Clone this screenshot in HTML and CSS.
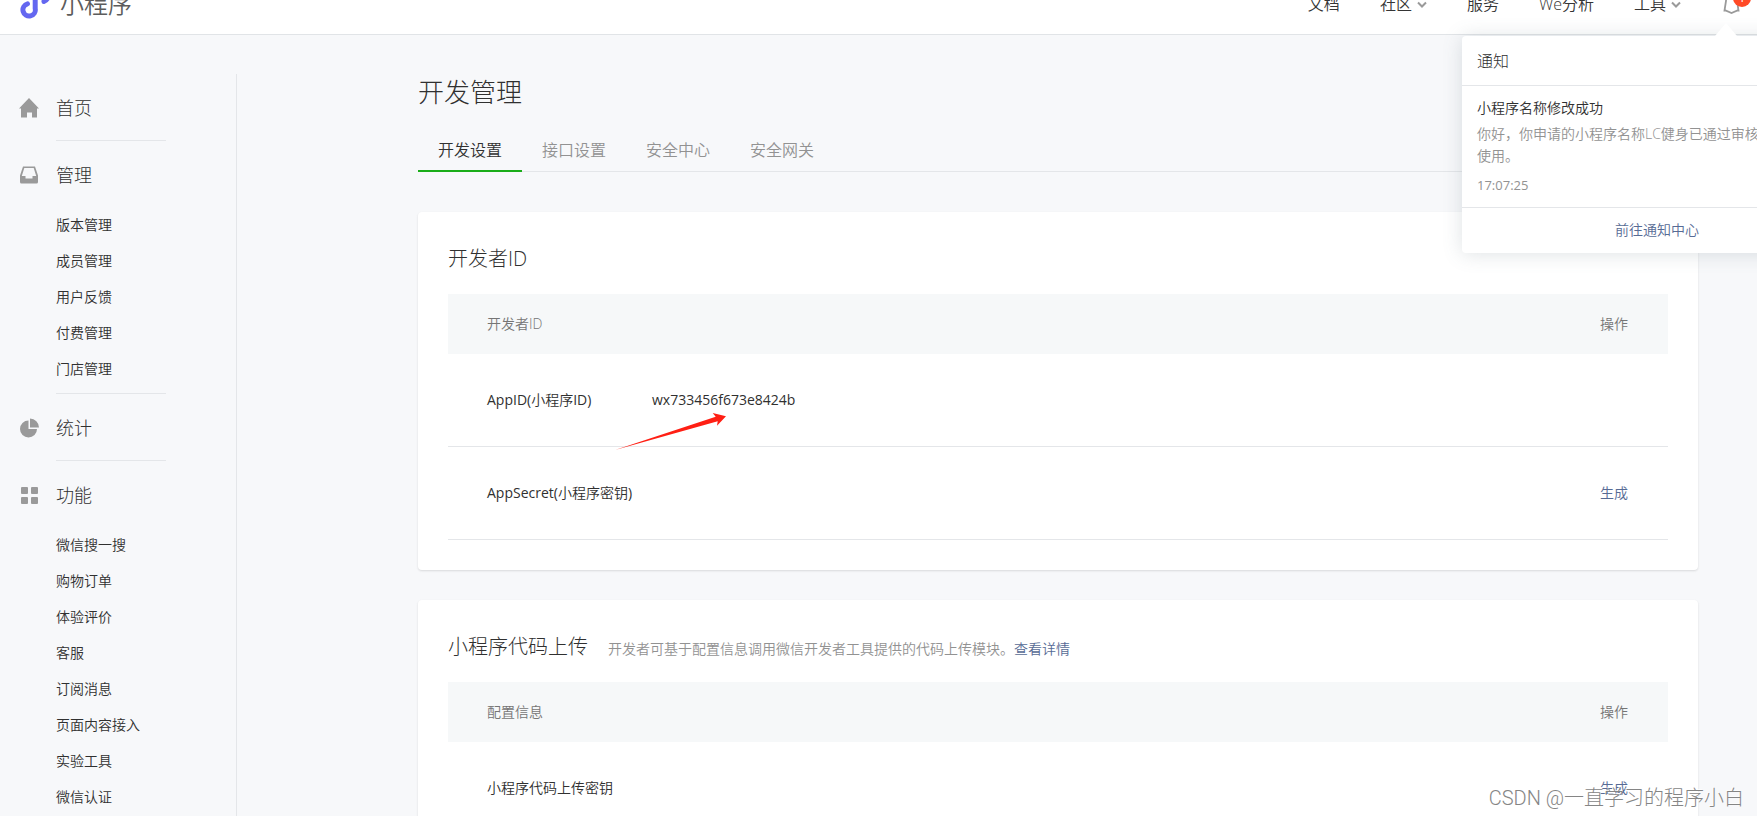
FILE: index.html
```html
<!DOCTYPE html>
<html lang="zh-CN">
<head>
<meta charset="utf-8">
<title>小程序 - 开发管理</title>
<link rel="stylesheet" href="styles.css">
</head>
<body>
<header class="header">
  <div class="header-inner">
    <a class="brand" href="#">
      <svg class="brand-logo" width="34" height="36" viewBox="18 -14 34 36" fill="none" stroke="#6467f0" stroke-width="5" stroke-linecap="round"><path d="M27.500 3.800A6.200 6.200 0 1 0 35.200 8.500V-4A6.500 6.500 0 1 1 44 1.500"/></svg>
      <span>小程序</span>
    </a>
    <nav class="nav">
      <a href="#">文档</a>
      <a href="#">社区<svg class="chevron" width="10" height="8" viewBox="0 0 10 8"><path d="M1 2.500l4 4 4-4"/></svg></a>
      <a href="#">服务</a>
      <a href="#">We分析</a>
      <a href="#">工具<svg class="chevron" width="10" height="8" viewBox="0 0 10 8"><path d="M1 2.500l4 4 4-4"/></svg></a>
      <button class="bell" type="button" aria-label="通知">
        <svg width="20" height="24" viewBox="0 0 20 24" fill="none" stroke="#9a9a9a" stroke-width="1.800"><path d="M5 9a5.500 5.500 0 0 1 11 0l1.500 9.500h-1L10.500 21 4.500 18.500h-1z"/></svg>
        <span class="badge">1</span>
      </button>
    </nav>
  </div>
</header>

<section class="popover">
  <h2 class="popover-title">通知</h2>
  <div class="notice">
    <h3>小程序名称修改成功</h3>
    <p>你好，你申请的小程序名称LC健身已通过审核<br>使用。</p>
    <time>17:07:25</time>
  </div>
  <a class="popover-link" href="#">前往通知中心</a>
</section>

<div class="page">
  <aside class="sidebar">
    <section class="group">
      <a class="group-head" href="#"><svg width="22" height="22" viewBox="0 0 22 22"><path d="M11 1L21 11.500H19V20.500H14V15.500H9V20.500H3V11.500H1Z"/></svg>首页</a>
    </section>
    <section class="group">
      <a class="group-head" href="#"><svg width="22" height="22" viewBox="0 0 22 22"><path fill-rule="evenodd" d="M5 2.500h12l3 9V18a1.500 1.500 0 0 1-1.500 1.500h-15A1.500 1.500 0 0 1 2 18v-6.500zM6.300 4L3.800 12H7.500v2.500h7V12h3.700L15.700 4z"/></svg>管理</a>
      <ul class="menu">
        <li><a href="#">版本管理</a></li>
        <li><a href="#">成员管理</a></li>
        <li><a href="#">用户反馈</a></li>
        <li><a href="#">付费管理</a></li>
        <li><a href="#">门店管理</a></li>
      </ul>
    </section>
    <section class="group">
      <a class="group-head" href="#"><svg width="22" height="22" viewBox="0 0 22 22"><path d="M10.500 3.500v8.500H19A8.500 8.500 0 1 1 10.500 3.500zM12 1.500a9 9 0 0 1 9 9h-9z"/></svg>统计</a>
    </section>
    <section class="group">
      <a class="group-head" href="#"><svg width="22" height="22" viewBox="0 0 22 22"><rect x="3" y="3" width="7" height="7" rx="1"/><rect x="13" y="3" width="7" height="7" rx="1"/><rect x="3" y="13" width="7" height="7" rx="1"/><rect x="13" y="13" width="7" height="7" rx="1"/></svg>功能</a>
      <ul class="menu">
        <li><a href="#">微信搜一搜</a></li>
        <li><a href="#">购物订单</a></li>
        <li><a href="#">体验评价</a></li>
        <li><a href="#">客服</a></li>
        <li><a href="#">订阅消息</a></li>
        <li><a href="#">页面内容接入</a></li>
        <li><a href="#">实验工具</a></li>
        <li><a href="#">微信认证</a></li>
      </ul>
    </section>
  </aside>

  <main class="main">
    <h1 class="title">开发管理</h1>
    <nav class="tabs">
      <a class="tab active" href="#">开发设置</a>
      <a class="tab" href="#">接口设置</a>
      <a class="tab" href="#">安全中心</a>
      <a class="tab" href="#">安全网关</a>
    </nav>

    <section class="card">
      <div class="card-head"><h2>开发者ID</h2></div>
      <table class="table">
        <thead><tr><th class="label">开发者ID</th><th></th><th class="action">操作</th></tr></thead>
        <tbody>
          <tr>
            <td class="label"><span class="latin">AppID(</span>小程序<span class="latin">ID)</span></td>
            <td class="value latin">wx733456f673e8424b<svg class="arrow" width="120" height="44" viewBox="0 0 120 44"><path fill="#ff1f14" d="M5 40L105.700 6.700L102.700 3L116 6.300L107 15.700L107.700 11.300Z"/></svg></td>
            <td class="action"></td>
          </tr>
          <tr><td class="label"><span class="latin">AppSecret(</span>小程序密钥<span class="latin">)</span></td><td></td><td class="action"><a href="#">生成</a></td></tr>
        </tbody>
      </table>
    </section>

    <section class="card">
      <div class="card-head">
        <h2>小程序代码上传</h2>
        <p>开发者可基于配置信息调用微信开发者工具提供的代码上传模块。<a href="#">查看详情</a></p>
      </div>
      <table class="table">
        <thead><tr><th class="label">配置信息</th><th></th><th class="action">操作</th></tr></thead>
        <tbody>
          <tr><td class="label">小程序代码上传密钥</td><td></td><td class="action"><a href="#">生成</a></td></tr>
        </tbody>
      </table>
    </section>
  </main>
</div>
<div class="watermark">CSDN @一直学习的程序小白</div>
</body>
</html>
```
FILE: styles.css
```css
* { box-sizing: border-box; }
html, body { height: 100%; }
body {
  margin: 0;
  position: relative;
  overflow: hidden;
  background: #f7f8fa;
  color: #303030;
  font: 350 14px/22px "Open Sans", "Noto Sans CJK SC", sans-serif;
}
h1, h2, h3, p, ul { margin: 0; padding: 0; font-weight: inherit; }
h1, h2 { font-weight: 300; }
ul { list-style: none; }
a { color: #576b95; text-decoration: none; }
.latin { font-weight: 400; }

.header {
  height: 35px;
  overflow: hidden;
  background: #fff;
  border-bottom: 1px solid #e1e4e7;
}
.header-inner {
  display: flex;
  justify-content: space-between;
  align-items: center;
  height: 60px;
  margin-top: -26px;
  padding: 0 16px 0 18px;
}
.brand {
  display: flex;
  align-items: center;
  gap: 8px;
  color: #5c5c5c;
  font-size: 24px;
  line-height: 36px;
}
.nav { display: flex; align-items: center; gap: 40px; font-size: 16px; line-height: 24px; }
.nav a { display: flex; align-items: center; gap: 5px; color: #353535; }
.chevron { fill: none; stroke: #9a9a9a; stroke-width: 2; }
.bell {
  position: relative;
  display: flex;
  padding: 0;
  border: 0;
  background: none;
}
.badge {
  position: absolute;
  top: -3px;
  right: -10px;
  width: 18px;
  height: 18px;
  border-radius: 9px;
  background: #ff4a26;
  color: #fff;
  font: 400 12px/18px "Open Sans", sans-serif;
  text-align: center;
}

.popover {
  position: absolute;
  z-index: 2;
  top: 36px;
  right: -95px;
  width: 390px;
  background: #fff;
  border-radius: 4px;
  box-shadow: 0 1px 20px rgba(90, 110, 120, 0.2);
}
.popover::before {
  content: "";
  position: absolute;
  top: -13px;
  left: 253px;
  border: 11px solid transparent;
  border-top: 0;
  border-bottom: 13px solid #fff;
}
.popover-title { padding: 13px 15px 12px; font-size: 16px; line-height: 24px; border-bottom: 1px solid #e4e6e9; }
.notice { padding: 11px 15px; border-bottom: 1px solid #e4e6e9; color: #929292; }
.notice h3 { margin-bottom: 4px; color: #303030; font-size: 14px; }
.notice time { display: block; margin-top: 7px; font-size: 13px; font-weight: 400; }
.popover-link { display: block; padding: 11px 0 12px; text-align: center; }

.page { display: flex; min-height: 100%; padding-top: 39px; }
.sidebar { flex: none; width: 237px; padding-left: 18px; border-right: 1px solid #e4e6e9; }
.group-head {
  display: flex;
  align-items: center;
  gap: 16px;
  height: 66px;
  padding-top: 1px;
  color: #303030;
  font-size: 18px;
  font-weight: 300;
}
.group-head svg { fill: #9a9a9a; }
.group + .group::before {
  content: "";
  display: block;
  width: 110px;
  height: 1px;
  margin-left: 38px;
  background: #e4e6e9;
}
.menu { padding: 0 0 6px 38px; }
.menu a { display: block; color: #303030; line-height: 36px; }

.main { flex: 1; min-width: 0; margin: 0 59px 0 181px; }
.title { font-size: 26px; line-height: 36px; }
.tabs { display: flex; margin: 20px 0 40px; border-bottom: 1px solid #e4e6e9; }
.tab {
  padding: 8px 20px;
  margin-bottom: -1px;
  border-bottom: 2px solid transparent;
  color: #929292;
  font-size: 16px;
  line-height: 24px;
}
.tab.active { color: #303030; border-color: #1aad19; }

.card {
  margin-bottom: 30px;
  padding: 31px 30px 30px;
  background: #fff;
  border-radius: 4px;
  box-shadow: 0 1px 2px rgba(150, 150, 150, 0.3);
}
.card-head { display: flex; align-items: baseline; gap: 20px; margin-bottom: 19px; }
.card-head h2 { font-size: 20px; line-height: 32px; }
.card-head p { color: #929292; }

.table { width: 100%; table-layout: fixed; border-collapse: separate; border-spacing: 0; }
th { height: 60px; padding: 0; background: #f6f8f9; color: #757575; font-weight: 350; text-align: left; }
td { height: 93px; padding: 0; border-bottom: 1px solid #e4e6e9; }
.table .label { width: 204px; padding-left: 39px; white-space: nowrap; }
.table .action { width: 120px; padding-right: 40px; text-align: right; }
.value { position: relative; }
.arrow { position: absolute; left: -42px; top: 56px; }

.watermark {
  position: absolute;
  z-index: 3;
  right: 13px;
  bottom: 3px;
  color: #858585;
  font: 300 20px/30px Roboto, "Noto Sans CJK SC", sans-serif;
  text-shadow: -1px -1px 0 rgba(255, 255, 255, 0.8);
}
```
